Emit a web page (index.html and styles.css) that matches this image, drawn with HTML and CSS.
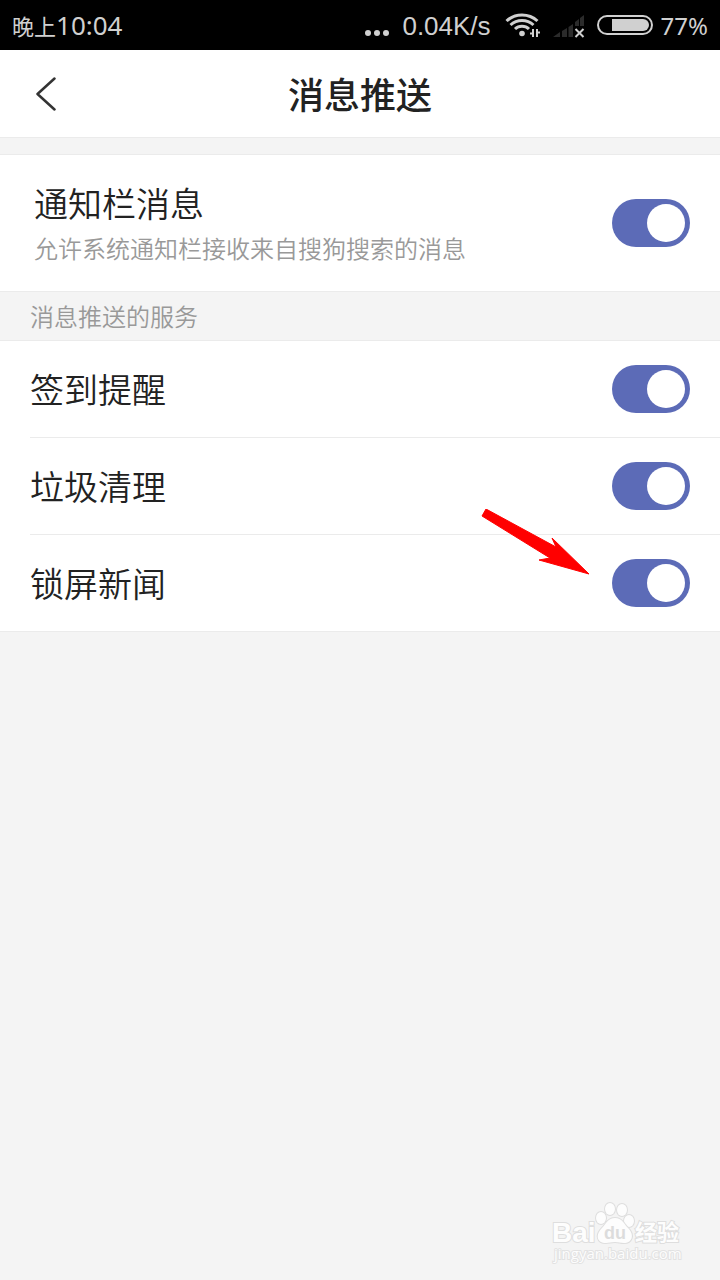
FILE: index.html
```html
<!DOCTYPE html>
<html lang="zh-CN">
  <head>
    <meta charset="UTF-8" />
    <meta name="viewport" content="width=device-width, initial-scale=1.0" />
    <title>消息推送</title>
    <link rel="stylesheet" href="styles.css">
  </head>
  <body>
    <div class="status">
      <div class="time"><span class="period">晚上</span>10:04</div>
      <div class="signals">
        <svg class="dots" width="26" height="8" viewBox="0 0 26 8">
          <circle cx="4" cy="4" r="3" /><circle cx="13" cy="4" r="3" /><circle cx="22" cy="4" r="3" />
        </svg>
        <span class="speed">0.04K/s</span>
        <svg class="wifi" width="36" height="26" viewBox="0 0 36 26">
          <g fill="none" stroke="#d0d0d0" stroke-width="3">
            <path d="M1.500 9A23 23 0 0 1 32.500 9" />
            <path d="M5.500 13A17 17 0 0 1 28.500 13" />
            <path d="M10 17A10 10 0 0 1 24 17" />
          </g>
          <circle cx="17" cy="21.500" r="2.800" />
          <path d="M28 17V25M32 17V25M25 21.500H28M32 20.500H35" fill="none" stroke="#d0d0d0" stroke-width="2" />
        </svg>
        <svg class="cell" width="32" height="24" viewBox="0 0 32 24">
          <path d="M0 22L7 17V22ZM9 22V16L14 13V22ZM15.500 22V12L20 9V22ZM22 11V7L26 4V11ZM27 11V3L31 0V11Z" fill="#2b2b2b" />
          <path d="M22.500 14L30.500 22M30.500 14L22.500 22" stroke="#d0d0d0" stroke-width="2" />
        </svg>
        <svg class="battery" width="56" height="20" viewBox="0 0 56 20">
          <rect x="1" y="1" width="54" height="18" rx="9" fill="none" stroke="#d0d0d0" stroke-width="2" />
          <path d="M15 4H46A6 6 0 0 1 46 16H15Z" />
        </svg>
        <span class="percent">77%</span>
      </div>
    </div>

    <header class="header">
      <button class="back" aria-label="返回">
        <svg width="20" height="34" viewBox="0 0 20 34">
          <path d="M18.500 1.500L1.500 17L18.500 32.500" fill="none" stroke="#333" stroke-width="2.500" stroke-linecap="round" stroke-linejoin="round" />
        </svg>
      </button>
      <h1>消息推送</h1>
    </header>

    <main>
      <div class="group">
        <div class="row notice">
          <label for="notice">
            通知栏消息
            <small>允许系统通知栏接收来自搜狗搜索的消息</small>
          </label>
          <input type="checkbox" class="switch" id="notice" checked />
        </div>
      </div>

      <h2>消息推送的服务</h2>

      <div class="group list">
        <div class="row">
          <label for="sign">签到提醒</label>
          <input type="checkbox" class="switch" id="sign" checked />
        </div>
        <div class="row">
          <label for="clean">垃圾清理</label>
          <input type="checkbox" class="switch" id="clean" checked />
        </div>
        <div class="row">
          <label for="news">锁屏新闻</label>
          <input type="checkbox" class="switch" id="news" checked />
          <svg class="arrow" width="108" height="66" viewBox="0 0 108 66">
            <path d="M5 0L75 38L71 29L108 65L58 51L69 49L1 7Z" fill="#f00" stroke="#f00" stroke-width="1" />
          </svg>
        </div>
      </div>
    </main>

    <svg class="mark" width="132" height="64" viewBox="0 0 132 64">
      <g fill="#fdfdfd" stroke="#dedede" stroke-width="2" paint-order="stroke">
        <text x="1" y="42" class="mark-name">Bai</text>
        <ellipse cx="50" cy="18" rx="5" ry="6" />
        <ellipse cx="59" cy="9" rx="5" ry="6" />
        <ellipse cx="71" cy="10" rx="5" ry="6" />
        <ellipse cx="78" cy="21" rx="5" ry="6" />
        <path d="M64 18C71 18 73 24 77 28C84 35 81 43 73 43C69 43 68 42 64 42C60 42 58 43 55 43C46 43 44 35 51 28C55 24 57 18 64 18Z" />
        <text x="53" y="39" class="mark-du">du</text>
        <text x="84" y="40" class="mark-cn">经验</text>
        <text x="3" y="59" class="mark-url">jingyan.baidu.com</text>
      </g>
    </svg>
  </body>
</html>
```
FILE: styles.css
```css
* {
  box-sizing: border-box;
}
body {
  margin: 0;
  min-height: 100vh;
  position: relative;
  background-color: #f4f4f4;
  color: #222;
  font-family: "Noto Sans CJK SC", sans-serif;
}
svg {
  display: block;
  flex: none;
}

/* status bar */
.status {
  display: flex;
  justify-content: space-between;
  align-items: center;
  height: 50px;
  padding: 0 12px;
  background-color: #000;
  color: #d0d0d0;
  fill: #d0d0d0;
}
.time {
  font: 26px "Noto Sans", "Noto Sans CJK SC", sans-serif;
}
.period {
  font-size: 22px;
}
.signals {
  display: flex;
  align-items: center;
}
.dots {
  margin: 16px 12px 0 0;
}
.speed {
  padding-top: 2px;
  font: 26px "Liberation Sans", sans-serif;
}
.wifi {
  margin-left: 14px;
}
.cell {
  margin: 4px 12px 0 12px;
}
.percent {
  margin-left: 8px;
  font: 24px "Noto Sans", sans-serif;
}

/* title bar */
.header {
  display: grid;
  grid-template-columns: 92px 1fr 92px;
  align-items: center;
  height: 88px;
  background-color: #fff;
  border-bottom: 1px solid #ebebeb;
}
.back {
  display: flex;
  justify-content: center;
  padding: 12px 0;
  border: none;
  background: none;
  cursor: pointer;
}
h1 {
  margin: 0;
  padding-bottom: 2px;
  text-align: center;
  font-size: 36px;
  font-weight: 500;
  line-height: 52px;
}

/* settings */
.group {
  background-color: #fff;
  border-top: 1px solid #ebebeb;
  border-bottom: 1px solid #ebebeb;
}
main {
  padding-top: 16px;
}
.row {
  position: relative;
  display: flex;
  justify-content: space-between;
  align-items: center;
  min-height: 96px;
  padding-right: 30px;
}
.notice {
  min-height: 136px;
  padding-left: 34px;
}
.list {
  padding-left: 30px;
}
.list .row + .row {
  min-height: 97px;
  border-top: 1px solid #ebebeb;
}
label {
  font-size: 34px;
  font-weight: 350;
  line-height: 50px;
}
small {
  display: block;
  color: #999;
  font-size: 24px;
  line-height: 40px;
}
h2 {
  margin: 0;
  padding: 0 30px;
  color: #999;
  font-size: 24px;
  font-weight: 350;
  line-height: 48px;
}
.switch {
  appearance: none;
  display: flex;
  align-items: center;
  flex: none;
  width: 78px;
  height: 48px;
  margin: 0;
  padding: 0 5px;
  border-radius: 24px;
  background-color: #5c6bb7;
  cursor: pointer;
}
.switch::before {
  content: "";
  width: 38px;
  height: 38px;
  border-radius: 50%;
  background-color: #fff;
}
.switch:checked {
  justify-content: flex-end;
}
.switch:not(:checked) {
  background-color: #ccc;
}
.arrow {
  position: absolute;
  top: -26px;
  right: 131px;
  pointer-events: none;
}

/* watermark */
.mark {
  position: absolute;
  right: 37px;
  bottom: 16px;
}
.mark-name {
  font: bold 28px "Liberation Sans", sans-serif;
}
.mark-du {
  font: bold 18px "Liberation Sans", sans-serif;
  fill: #dcdcdc;
  stroke: none;
}
.mark-cn {
  font: bold 22px "Noto Sans CJK SC", sans-serif;
}
.mark-url {
  font: 15px "Open Sans", sans-serif;
  stroke: #e2e2e2;
}
```
